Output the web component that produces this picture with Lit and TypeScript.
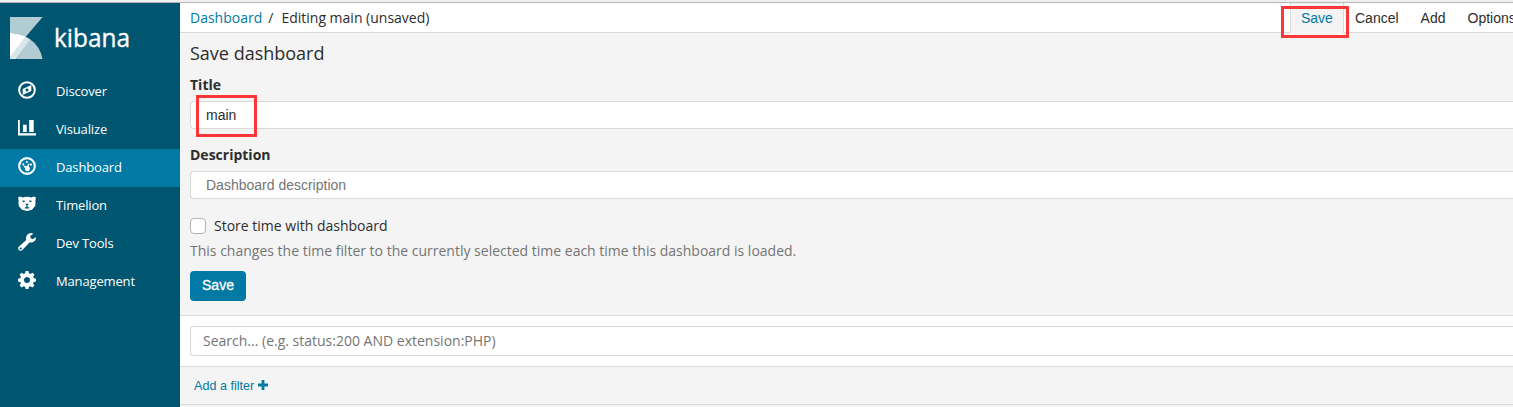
import { LitElement, html, css, svg } from "lit";
import { customElement } from "lit/decorators.js";
import { classMap } from "lit/directives/class-map.js";

const icons = {
  discover: svg`<circle cx="9" cy="9" r="7.85" fill="none" stroke="#fff" stroke-width="2"/><path fill-rule="evenodd" d="M13.3 3.9v6.2L4.7 14V8.1zM9 7.6a1.5 1.5 0 1 0 .01 0z"/>`,
  visualize: svg`<path d="M0 1h1.8v13.3H18V16.6H0zM5 5.7h3.7v7.3H5zM11.2 1h4.5v12h-4.5z"/>`,
  dashboard: svg`<circle cx="9" cy="9" r="7.85" fill="none" stroke="#fff" stroke-width="2.1"/><circle cx="5.2" cy="7.2" r="1"/><circle cx="8.8" cy="5" r="1"/><circle cx="12.9" cy="7.6" r="1.1"/><path d="M5 8.3 8.7 9.3 10.8 6.3 11.6 6.8 10.6 9.6A2.5 2.5 0 1 1 7 11.2z"/>`,
  timelion: svg`<path fill-rule="evenodd" d="M0 2.4 2 1.4 4.6 2.4Q9 1.3 13.4 2.4L16 1.4 18 2.4 17.4 5.2Q17.7 8 17.2 11L14 14.7 9 16 4 14.7 .8 11Q.3 8 .6 5.2zM4.6 5.6v1.3h2V5.6zM11.4 5.6v1.3h2V5.6zM7.3 8.7h3.4L9.6 10.6v1.6h1.6v1.2H6.8v-1.2h1.6v-1.6z"/>`,
  tools: svg`<path fill-rule="evenodd" d="M12.8 0Q14.2 0 15.4.7L12.4 2.7V5L14.5 6.2 17.8 4.2Q18.3 6 16.9 7.8 14.8 10.1 11.7 9.2L4.4 17.1Q3 18.5 1.1 17.2-.8 15.5.8 13.8L8.2 7Q7.5 4.2 9.2 1.7 10.7.1 12.8 0zM2.6 14.4a1 1 0 1 0 .02 0z"/>`,
  management: svg`<path fill-rule="evenodd" d="M7.6 0h2.8l.5 2.3 1.5.6 2.1-1.2 2 2-1.3 2 .6 1.6 2.2.4v2.8l-2.3.5-.6 1.5 1.3 2-2 2-2-1.3-1.5.6-.5 2.2H7.6l-.5-2.2-1.5-.6-2 1.3-2-2 1.3-2-.6-1.5L0 10.5V7.7l2.3-.4.6-1.6-1.3-2 2-2 2 1.2 1.5-.6zM9 5.9a3.1 3.1 0 1 0 .01 0z"/>`,
};

const navItems: { label: string; icon: keyof typeof icons; active?: boolean }[] = [
  { label: "Discover", icon: "discover" },
  { label: "Visualize", icon: "visualize" },
  { label: "Dashboard", icon: "dashboard", active: true },
  { label: "Timelion", icon: "timelion" },
  { label: "Dev Tools", icon: "tools" },
  { label: "Management", icon: "management" },
];

@customElement("kibana-sidebar")
class KibanaSidebar extends LitElement {
  static styles = css`
    :host { display: block; width: 180px; flex: none; background: #005571; color: #fff; }
    .brand { height: 70px; }
    .brand svg { display: block; }
    .wordmark { font-family: "Open Sans", sans-serif; font-size: 25px; fill: #fff; stroke: #fff; stroke-width: .35px; }
    .item { display: flex; align-items: center; height: 38px; font: 13px/36px "Open Sans", sans-serif; letter-spacing: -.15px; }
    .item span { padding-bottom: 2px; }
    .active { background: #0079a5; }
    .icon { width: 18px; height: 18px; margin: 0 20px 4px 18px; fill: #fff; flex: none; }
  `;
  render() {
    return html`
      <div class="brand">
        <svg width="180" height="70" viewBox="0 3 180 70">
          <path d="M10 17H42.6L25.8 36.8Q18.5 33 10 33z" fill="#b2ccd4"/>
          <path d="M30 39.2Q40 46 42.6 59H16z" fill="#b2ccd4"/>
          <path d="M25.8 36.8Q28 37.8 30.3 39.4L16 59H10V56.5z" fill="#d9e6ea"/>
          <path d="M10 33Q18.5 33 26 36.8L10 57z" fill="#fff"/>
          <text class="wordmark" x="54" y="47" textLength="76" lengthAdjust="spacingAndGlyphs">kibana</text>
        </svg>
      </div>
      <nav>
        ${navItems.map(
          (n) => html`<div class=${classMap({ item: true, active: !!n.active })}>
            <svg class="icon" viewBox="0 0 18 18">${icons[n.icon]}</svg><span>${n.label}</span>
          </div>`
        )}
      </nav>
    `;
  }
}

@customElement("app-root")
class AppRoot extends LitElement {
  static styles = css`
    :host { display: block; position: relative; width: 1513px; height: 407px; overflow: hidden; background: #f4f4f4; color: #2d2d2d; font: 14px/20px "Open Sans", sans-serif; }
    * { box-sizing: border-box; }
    .chrome { height: 3px; background: #f0f0f0; border-bottom: 1px solid #b5b5b5; }
    .shell { display: flex; height: 404px; }
    .main { flex: 1; min-width: 0; }
    .topbar { display: flex; justify-content: space-between; height: 30px; background: #fff; border-bottom: 1px solid #d9d9d9; padding-left: 10px; line-height: 29px; white-space: nowrap; }
    .link { color: #0079a5; }
    .slash { margin: 0 8px 0 6px; }
    .menu { display: flex; width: 223px; font: 14px/31px "Liberation Sans", Arial, sans-serif; }
    .tab { height: 30px; flex: none; padding: 0 11px; }
    .tab.selected { width: 54px; padding: 0 10px; color: #0079a5; background: #f4f4f4; border: solid #d9d9d9; border-width: 0 1px; }
    .form { height: 282px; padding: 10px 0 0 10px; display: flex; flex-direction: column; }
    .heading { font-size: 18px; line-height: 20px; height: 22px; }
    .label { font-weight: 700; line-height: 20px; margin-top: 10px; }
    .field { height: 28px; margin-top: 6px; padding: 0 15px; line-height: 27px; font-family: "Liberation Sans", Arial, sans-serif; background: #fff; border: 1px solid #d9d9d9; border-right: 0; border-radius: 4px 0 0 4px; }
    .label.second { margin-top: 16px; }
    .muted { color: #757575; }
    .check { display: flex; align-items: center; gap: 8px; margin-top: 17px; height: 20px; }
    .box { width: 16px; height: 16px; background: #fff; border: 1px solid #b3b3b3; border-radius: 4px; }
    .hint { margin-top: 5px; }
    .button { width: 56px; height: 30px; margin-top: 10px; border-radius: 4px; background: #0079a5; color: #fff; text-align: center; font: 14px/28px "Liberation Sans", Arial, sans-serif; -webkit-text-stroke: .3px #fff; }
    .search { height: 52px; padding: 10px 0 10px 10px; background: #fff; border: solid #d9d9d9; border-width: 1px 0; }
    .query { height: 30px; padding-left: 12px; line-height: 28px; border: 1px solid #d9d9d9; border-right: 0; border-radius: 4px 0 0 4px; }
    .filters { display: flex; align-items: center; gap: 4px; height: 38px; padding: 0 0 1px 14px; border-bottom: 1px solid #d9d9d9; color: #0079a5; font: 12px/36px "Liberation Sans", Arial, sans-serif; }
    .filters span { font-size: 12.6px; padding-top: 1px; }
    .plus { width: 10px; height: 10px; fill: #0079a5; }
    .mark { position: absolute; border: 3px solid #fb3837; }
    .mark-save { left: 1281px; top: 6px; width: 68px; height: 32px; }
    .mark-title { left: 196px; top: 95px; width: 61px; height: 42px; }
  `;
  render() {
    return html`
      <div class="chrome"></div>
      <div class="shell">
        <kibana-sidebar></kibana-sidebar>
        <div class="main">
          <div class="topbar">
            <div><span class="link">Dashboard</span><span class="slash">/</span><span>Editing main (unsaved)</span></div>
            <div class="menu">
              <span class="tab selected">Save</span><span class="tab">Cancel</span><span class="tab">Add</span><span class="tab">Options</span>
            </div>
          </div>
          <div class="form">
            <div class="heading">Save dashboard</div>
            <div class="label">Title</div>
            <div class="field">main</div>
            <div class="label second">Description</div>
            <div class="field muted">Dashboard description</div>
            <div class="check"><span class="box"></span><span>Store time with dashboard</span></div>
            <div class="hint muted">This changes the time filter to the currently selected time each time this dashboard is loaded.</div>
            <div class="button">Save</div>
          </div>
          <div class="search"><div class="query muted">Search... (e.g. status:200 AND extension:PHP)</div></div>
          <div class="filters"><span>Add a filter</span><svg class="plus" viewBox="0 0 10 10"><path d="M3.6 0h2.8v3.6H10v2.8H6.4V10H3.6V6.4H0V3.6h3.6z"/></svg></div>
        </div>
      </div>
      <div class="mark mark-save"></div>
      <div class="mark mark-title"></div>
    `;
  }
}
